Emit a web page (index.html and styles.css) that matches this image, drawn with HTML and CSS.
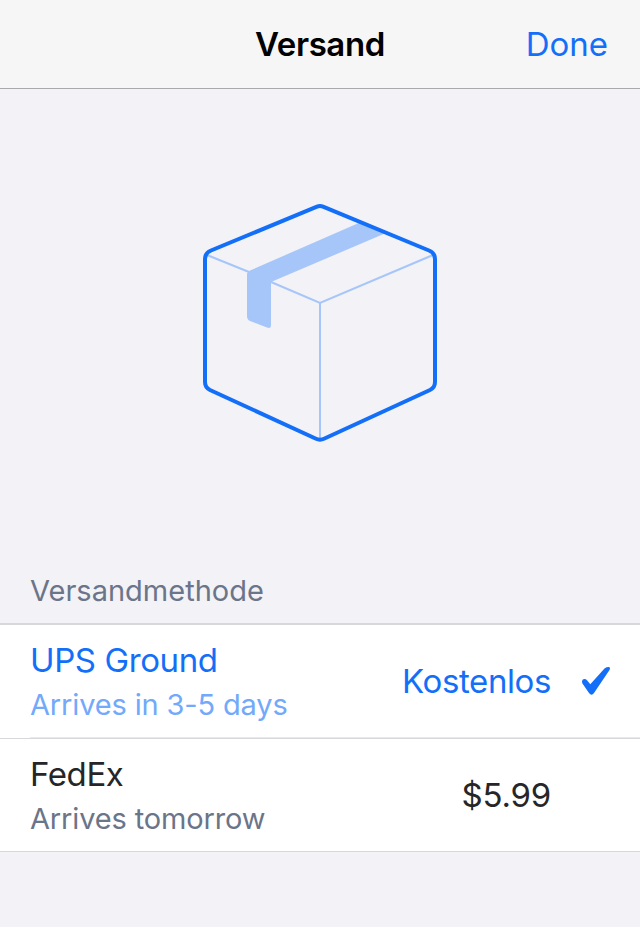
FILE: index.html
```html
<!DOCTYPE html>
<html lang="de">
<head>
<meta charset="utf-8">
<title>Versand</title>
<link rel="stylesheet" href="styles.css">
</head>
<body>
<header class="navbar">
  <h1 class="title">Versand</h1>
  <button class="done">Done</button>
</header>
<main>
  <div class="hero">
    <svg class="box" width="240" height="244" viewBox="200 200 240 244" fill="none" aria-hidden="true">
      <path d="M361 222L386 233L271 282V325Q271 329 267 327.500L250 321Q247 319.500 247 316V274Q247 272 250 270.500Z" fill="#a6c6fa"/>
      <path d="M207 255L249 272M271 282L320 303L433 255M320 303V438" stroke="#a6c6fa" stroke-width="2"/>
      <path d="M317 206.700Q320 205.400 323 206.700L429 250.500Q435 253 435 259V382Q435 387.500 430 390L324 438.700Q320 440.600 316 438.700L210 390Q205 387.500 205 382V259Q205 253 211 250.500Z" stroke="#146ff8" stroke-width="4"/>
    </svg>
  </div>
  <h2 class="section-title">Versandmethode</h2>
  <div class="methods">
    <div class="method selected">
      <div class="info"><span class="name">UPS Ground</span><span class="detail">Arrives in 3-5 days</span></div>
      <span class="price">Kostenlos</span>
      <svg class="check" width="30" height="30" viewBox="0 0 30 30" aria-hidden="true"><path d="M2 16Q2 13 4.500 13Q6 13 7 14.300L10.300 18.300L24.500 2.400Q26.500 .9 29 1Q30.700 1.500 29.500 4L14 27Q11.500 30.500 9 27L2.800 18Q2 17 2 16Z" fill="#146ff8"/></svg>
    </div>
    <div class="method">
      <div class="info"><span class="name">FedEx</span><span class="detail">Arrives tomorrow</span></div>
      <span class="price amount">$5.99</span>
    </div>
  </div>
</main>
</body>
</html>
```
FILE: styles.css
```css
* { box-sizing: border-box; }
body { margin: 0; background: #f2f2f7; color: #262628; font-family: Inter, "Liberation Sans", sans-serif; }
.navbar { height: 89px; display: grid; grid-template-columns: 1fr auto 1fr; align-items: center; padding: 0 32px; background: #f6f6f6; border-bottom: 1px solid #a9a9ab; }
.title { grid-column: 2; margin: 0; font-size: 33px; font-weight: 600; line-height: 42px; letter-spacing: -.4px; color: #000; }
.done { justify-self: end; border: 0; padding: 0; background: none; font: 400 33px/42px Inter, sans-serif; color: #146ff8; }
.hero { height: 468px; display: flex; justify-content: center; padding-top: 111px; }
.section-title { height: 68px; margin: 0; padding: 15px 30px 0; font-size: 29px; font-weight: 400; line-height: 38px; color: #6b7589; border-bottom: 2px solid #d8d8dc; }
.methods { background: #fff; border-bottom: 1px solid #d8d8dc; }
.method { height: 112px; display: flex; align-items: center; padding: 0 30px; }
.method.selected { height: 114px; padding-bottom: 2px; background: linear-gradient(#e9e9eb, #e9e9eb) 30px 112px / 100% 1px no-repeat, linear-gradient(#d8d8dc, #d8d8dc) 0 113px / 100% 1px no-repeat; }
.info { display: flex; flex-direction: column; flex: 1; align-self: flex-start; padding-top: 12px; }
.name { font-size: 33px; line-height: 46px; letter-spacing: -.4px; }
.detail { font-size: 29px; line-height: 44px; letter-spacing: -.15px; color: #6b7589; }
.price { font-size: 33px; line-height: 42px; letter-spacing: -.4px; margin-right: 59px; }
.amount { letter-spacing: -.2px; }
.selected, .selected .name { color: #146ff8; }
.selected .detail { color: #72a9fa; }
.selected .price { margin-right: 29px; }
.check { flex: none; }
```
